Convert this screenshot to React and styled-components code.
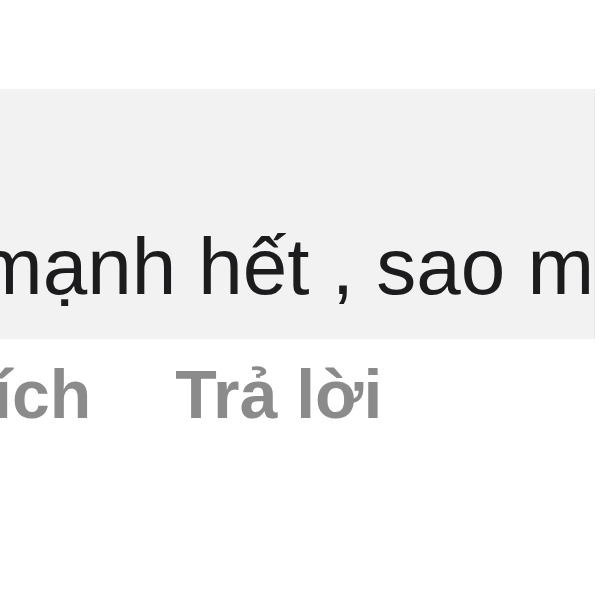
import React from 'react';
import styled, { createGlobalStyle } from 'styled-components';

const GlobalStyle = createGlobalStyle`
  html, body {
    margin: 0;
    padding: 0;
    background: #ffffff;
  }
  body {
    font-family: "Liberation Sans", Arial, sans-serif;
  }
`;

const Page = styled.div`
  width: 600px;
  height: 600px;
  overflow: hidden;
  padding-top: 89px;
  box-sizing: border-box;
`;

const Bubble = styled.div`
  width: 595px;
  height: 250px;
  box-sizing: border-box;
  background: #f2f2f2;
  border-right: 1px solid #ececec;
  overflow: hidden;
  display: flex;
  align-items: flex-end;
  padding-bottom: 32px;
`;

const CommentText = styled.p`
  margin: 0;
  font-size: 80px;
  line-height: 80px;
  color: #1c1c1e;
  white-space: nowrap;
  margin-left: ${(p) => p.$offset}px;
`;

const Actions = styled.div`
  display: flex;
  gap: 84px;
  margin-top: 21px;
  margin-left: -7px;
`;

const ActionLink = styled.span`
  font-size: 68px;
  line-height: 68px;
  font-weight: 700;
  color: #8b8b8b;
  white-space: nowrap;
`;

export default function App() {
  return (
    <>
      <GlobalStyle />
      <Page>
        <Bubble>
          <CommentText $offset={-24}>mạnh hết , sao ma</CommentText>
        </Bubble>
        <Actions>
          <ActionLink>ích</ActionLink>
          <ActionLink>Trả lời</ActionLink>
        </Actions>
      </Page>
    </>
  );
}
